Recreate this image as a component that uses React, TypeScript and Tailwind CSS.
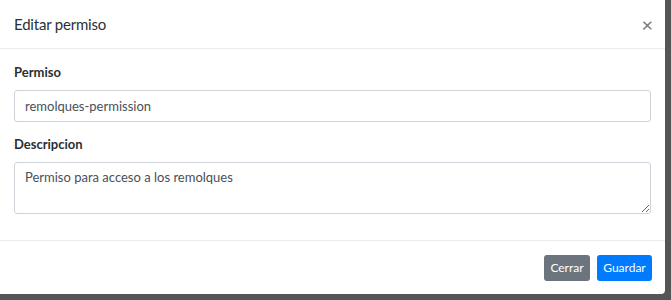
import React, { useState } from "react";

export default function App() {
  const [permiso, setPermiso] = useState("remolques-permission");
  const [descripcion, setDescripcion] = useState("Permiso para acceso a los remolques");

  return (
    <div
      className="w-[671px] h-[300px] bg-[#555] flex overflow-hidden"
      style={{ fontFamily: "Lato, 'Noto Sans', sans-serif" }}
    >
      <div className="w-[665px] h-[294px] bg-white rounded-br-[4px] flex flex-col text-[#212529]">
        {/* header */}
        <div className="h-[49px] flex items-center justify-between px-[14px] border-b border-[#e9ecef]">
          <h5 className="text-[15px] leading-none font-normal tracking-[-0.2px] text-[#2b2f33]">Editar permiso</h5>
          <button className="text-[#777] text-[20px] leading-none font-normal -mr-[2px]">×</button>
        </div>

        {/* body */}
        <div className="flex flex-col px-[14px] pt-[14px] h-[191px]">
          <label className="text-[13px] font-bold leading-none mt-[3px] mb-[11px] text-[#2b2f33]">Permiso</label>
          <input
            value={permiso}
            onChange={(e) => setPermiso(e.target.value)}
            className="h-[32px] w-full border border-[#ced4da] rounded-[3px] px-[10px] text-[13px] text-[#495057] outline-none"
          />
          <label className="text-[13px] font-bold leading-none mt-[16px] mb-[11px] text-[#2b2f33]">Descripcion</label>
          <textarea
            value={descripcion}
            onChange={(e) => setDescripcion(e.target.value)}
            className="h-[52px] w-full border border-[#ced4da] rounded-[3px] px-[10px] py-[5px] text-[13px] text-[#495057] outline-none resize-y"
          />
        </div>

        {/* footer */}
        <div className="flex-1 flex items-center justify-end gap-[7px] px-[13px] border-t border-[#e9ecef]">
          <button className="h-[26px] w-[46px] rounded-[3px] bg-[#6c757d] text-white text-[12px]">Cerrar</button>
          <button className="h-[26px] w-[55px] rounded-[3px] bg-[#007bff] text-white text-[12px]">Guardar</button>
        </div>
      </div>
    </div>
  );
}
